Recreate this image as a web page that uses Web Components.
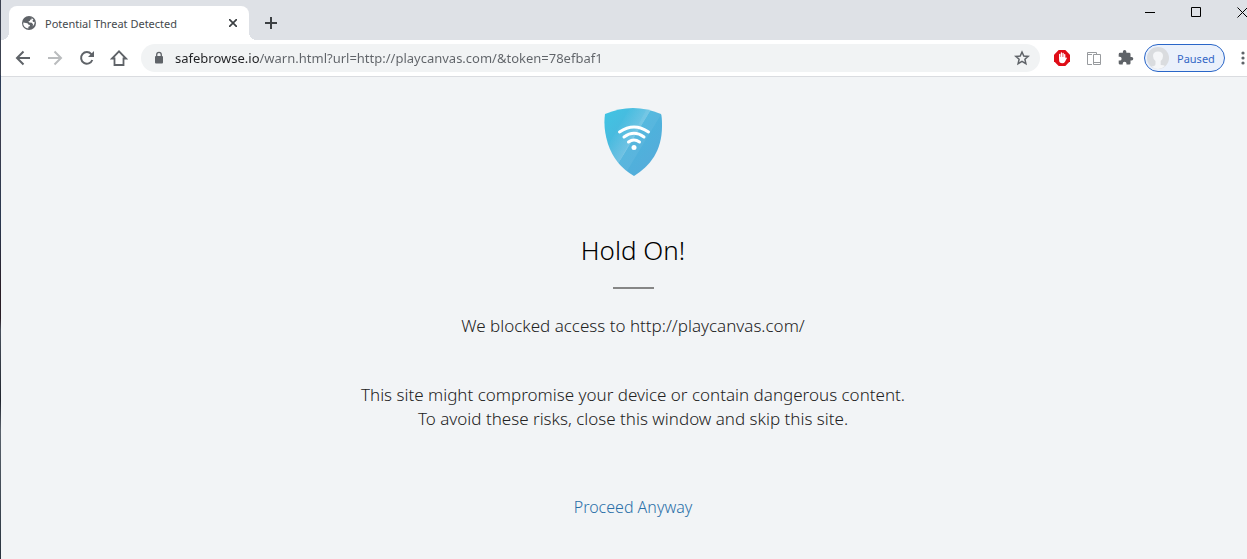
<!DOCTYPE html>
<html lang="en">
<head>
<meta charset="utf-8">
<title>Potential Threat Detected</title>
<style>
  html, body {
    height: 100%;
    margin: 0;
    overflow: hidden;
  }
  body {
    font-family: "Noto Sans", "Liberation Sans", sans-serif;
    background: #f2f4f6;
  }
</style>
</head>
<body>
<sb-window>
  <sb-tab-strip slot="tabs">
    <sb-tab>Potential Threat Detected</sb-tab>
  </sb-tab-strip>
  <sb-toolbar slot="toolbar" profile="Paused">
    <sb-address url="safebrowse.io/warn.html?url=http://playcanvas.com/&amp;token=78efbaf1"></sb-address>
  </sb-toolbar>
  <sb-warning>
    <span slot="title">Hold On!</span>
    <span slot="blocked">We blocked access to http://playcanvas.com/</span>
    <span slot="detail">This site might compromise your device or contain dangerous content.<br>To avoid these risks, close this window and skip this site.</span>
    <span slot="action">Proceed Anyway</span>
  </sb-warning>
</sb-window>

<script>
class SBWindow extends HTMLElement {
  constructor() {
    super();
    this.attachShadow({ mode: 'open' });
  }

  connectedCallback() {
    this.shadowRoot.innerHTML = `
      <style>
        /* the window runs a little past the right edge of the screen */
        :host {
          display: flex;
          flex-direction: column;
          box-sizing: border-box;
          min-height: 100%;
          margin-right: -18px;
          border-left: 1px solid;
          border-image: linear-gradient(#3c4250 0 76px, #2b3a55 76px, #33415a 110px, #3c3c4c 130px, #2a3850 220px, #291c25 290px, #291c25 318px, #48505c 330px, #20242e 400px, #5a626c 430px, #28323e 559px) 1;
        }
      </style>
      <slot name="tabs"></slot>
      <slot name="toolbar"></slot>
      <slot></slot>
    `;
  }
}

class SBTabStrip extends HTMLElement {
  constructor() {
    super();
    this.attachShadow({ mode: 'open' });
  }

  connectedCallback() {
    this.shadowRoot.innerHTML = `
      <style>
        :host {
          display: flex;
          align-items: flex-start;
          height: 40px;
          padding-left: 8px;
          background: #dee1e6;
        }
        button {
          display: flex;
          align-items: center;
          justify-content: center;
          padding: 0;
          border: 0;
          background: none;
        }
        .new-tab {
          width: 28px;
          height: 28px;
          margin: 9px 0 0 8px;
          color: #3c4043;
        }
        .controls {
          display: flex;
          margin-left: auto;
          color: #000;
        }
        .controls button {
          width: 46px;
          height: 24px;
        }
        svg {
          fill: none;
          stroke: currentColor;
        }
      </style>
      <slot></slot>
      <button class="new-tab" aria-label="New tab">
        <svg width="12" height="12" stroke-width="2"><path d="M6 0v12M0 6h12"/></svg>
      </button>
      <div class="controls">
        <button aria-label="Minimize"><svg width="11" height="11"><path d="M0 5.500h10"/></svg></button>
        <button aria-label="Maximize"><svg width="11" height="11"><path d="M.5 .5h9v9h-9z"/></svg></button>
        <button aria-label="Close"><svg width="11" height="11"><path d="M.5 .5l10 10M10.500 .5l-10 10"/></svg></button>
      </div>
    `;
  }
}

class SBTab extends HTMLElement {
  constructor() {
    super();
    this.attachShadow({ mode: 'open' });
  }

  connectedCallback() {
    this.shadowRoot.innerHTML = `
      <style>
        :host {
          position: relative;
          display: flex;
          align-items: center;
          box-sizing: border-box;
          width: 240px;
          height: 34px;
          margin-top: 6px;
          padding: 0 8px 0 12px;
          border-radius: 8px 8px 0 0;
          background: #fff;
          color: #45494d;
          font-size: 11px;
        }
        /* feet where the tab meets the toolbar */
        :host::before,
        :host::after {
          content: "";
          position: absolute;
          bottom: 0;
          width: 8px;
          height: 8px;
        }
        :host::before {
          left: -8px;
          background: radial-gradient(circle at 0 0, transparent 8px, #fff 8px);
        }
        :host::after {
          right: -8px;
          background: radial-gradient(circle at 100% 0, transparent 8px, #fff 8px);
        }
        .label {
          flex: 1;
          margin-left: 8px;
          white-space: nowrap;
        }
        button {
          display: flex;
          align-items: center;
          justify-content: center;
          width: 16px;
          height: 16px;
          padding: 0;
          border: 0;
          background: none;
        }
      </style>
      <svg width="16" height="16" viewBox="0 0 16 16">
        <circle cx="8" cy="8" r="7" fill="#5f6368"/>
        <path d="M2.300 7.600L6.300 8.300Q7.200 8.600 7.200 9.500L9 10L8.700 11.200L7.300 11.800L7.400 13.600Q3.200 13.200 2.300 9.600Z" fill="#fff"/>
        <path d="M8.200 2.400L10.600 2.800L10.800 4.200L9.200 4.800L8.800 6L7.300 6.600L8.300 7.500L10.800 7.700L12 9.200L11.700 11.500Q14 9.400 13.600 6.800L12.200 6.900L11.400 5.800L12.500 4.600Q10.800 2.300 8.200 2.400Z" fill="#fff"/>
      </svg>
      <span class="label"><slot></slot></span>
      <button aria-label="Close tab">
        <svg width="8" height="8" fill="none" stroke="#3c4043" stroke-width="1.700"><path d="M0 0l8 8M8 0L0 8"/></svg>
      </button>
    `;
  }
}

class SBToolbar extends HTMLElement {
  constructor() {
    super();
    this.attachShadow({ mode: 'open' });
  }

  connectedCallback() {
    const profile = this.getAttribute('profile');
    this.shadowRoot.innerHTML = `
      <style>
        :host {
          display: flex;
          align-items: center;
          height: 36px;
          padding: 0 8px;
          border-bottom: 1px solid #dadce0;
          background: #fff;
          color: #5f6368;
        }
        button {
          display: flex;
          align-items: center;
          justify-content: center;
          flex: none;
          padding: 0;
          border: 0;
          background: none;
          color: inherit;
          font: inherit;
        }
        .icon {
          width: 28px;
          height: 28px;
        }
        .nav,
        .extensions {
          display: flex;
          gap: 4px;
        }
        .nav {
          margin-right: 8px;
        }
        .extensions {
          margin: 0 4px 0 8px;
        }
        .disabled {
          color: #babcbe;
        }
        .profile {
          justify-content: flex-start;
          gap: 8px;
          box-sizing: border-box;
          width: 81px;
          height: 28px;
          margin-right: 4px;
          padding-left: 2px;
          border: 1px solid #2a66c8;
          border-radius: 14px;
          background: #ebf1fb;
          color: #3367c6;
          font-size: 11px;
        }
      </style>
      <div class="nav">
        <button class="icon" aria-label="Back">
          <svg width="16" height="16" fill="none" stroke="currentColor" stroke-width="2"><path d="M15 8H2M8.500 1.500L2 8l6.500 6.500"/></svg>
        </button>
        <button class="icon disabled" aria-label="Forward" disabled>
          <svg width="16" height="16" fill="none" stroke="currentColor" stroke-width="2"><path d="M1 8h13M7.500 1.500L14 8l-6.500 6.500"/></svg>
        </button>
        <button class="icon" aria-label="Reload">
          <svg width="16" height="16"><path d="M13.300 10A5.800 5.800 0 1 1 12.300 4.100L13.500 5.300" fill="none" stroke="currentColor" stroke-width="2"/><path d="M15 1v6H9z" fill="currentColor"/></svg>
        </button>
        <button class="icon" aria-label="Home">
          <svg width="18" height="18" fill="none" stroke="currentColor" stroke-width="1.800"><path d="M2 9.500H4.500V16H13.500V9.500H16L9 2.300z"/></svg>
        </button>
      </div>
      <slot></slot>
      <div class="extensions">
        <button class="icon" aria-label="Ad blocker">
          <svg width="16" height="16" viewBox="0 0 16 16">
            <path d="M4.700 0h6.600L16 4.700v6.600L11.300 16H4.700L0 11.300V4.700z" fill="#df0d17"/>
            <path d="M5.700 8V4.300M7.400 7.500V3M9.100 7.500V3.300M10.700 8V4.600" stroke="#fff" stroke-width="1.300" stroke-linecap="round"/>
            <path d="M5.100 7H11.300V8.300L12.300 7.500L13 8L11 11.700Q10.200 13.300 8.300 13.300Q5.100 13.300 5.100 10z" fill="#fff"/>
          </svg>
        </button>
        <button class="icon" aria-label="Device preview">
          <svg width="16" height="16" fill="none" stroke="#989b9e" stroke-width="1">
            <path d="M6 14.500H1.500V2.500H10.500V4.500M1.500 4.500H6M7.500 14.500V4.500H14.500V14.500zM7.500 12.500H14.500"/>
          </svg>
        </button>
        <button class="icon" aria-label="Extensions">
          <svg width="16" height="16" viewBox="1 1 23 23" fill="currentColor"><path d="M20.500 11H19V7a2 2 0 0 0-2-2h-4V3.500a2.500 2.500 0 0 0-5 0V5H4a2 2 0 0 0-2 2v3.800h1.500a2.700 2.700 0 0 1 0 5.400H2V20a2 2 0 0 0 2 2h3.800v-1.500a2.700 2.700 0 0 1 5.400 0V22H17a2 2 0 0 0 2-2v-4h1.500a2.500 2.500 0 0 0 0-5z"/></svg>
        </button>
      </div>
      <button class="profile">
        <svg width="22" height="22" viewBox="0 0 22 22">
          <circle cx="11" cy="11" r="11" fill="#dadcdf"/>
          <path d="M8.500 17V14Q6 12 6 9Q6 4.500 11 4.500Q16 4.500 16 9Q16 12 13.700 14V18Q17 18 18 19Q15 22 11 22Q7.500 22 4.500 19.500Q8.500 19 8.500 17Z" fill="#f5f6f8"/>
        </svg>
        ${profile}
      </button>
      <button class="icon" aria-label="Menu">
        <svg width="4" height="16" fill="currentColor"><circle cx="2" cy="3" r="1.600"/><circle cx="2" cy="8" r="1.600"/><circle cx="2" cy="13" r="1.600"/></svg>
      </button>
    `;
  }
}

class SBAddress extends HTMLElement {
  constructor() {
    super();
    this.attachShadow({ mode: 'open' });
  }

  connectedCallback() {
    this.shadowRoot.innerHTML = `
      <style>
        :host {
          display: flex;
          align-items: center;
          flex: 1;
          height: 28px;
          padding: 0 10px 0 12px;
          border-radius: 14px;
          background: #f1f3f4;
        }
        /* the host name is darker than the rest of the address */
        input {
          flex: 1;
          min-width: 0;
          height: 20px;
          margin: 0 12px 0 10px;
          padding: 0;
          border: 0;
          outline: 0;
          background: linear-gradient(90deg, #202124 85px, #5f6368 85px);
          background-clip: text;
          -webkit-background-clip: text;
          -webkit-text-fill-color: transparent;
          color: #5f6368;
          font-family: inherit;
          font-size: 13px;
        }
        button {
          display: flex;
          padding: 0;
          border: 0;
          background: none;
        }
      </style>
      <svg width="12" height="14" viewBox="0 0 12 14">
        <rect x="2" y="5" width="8" height="7.500" rx="1" fill="#5f6368"/>
        <path d="M3.700 5.500V3.700a2.300 2.300 0 0 1 4.600 0V5.500" fill="none" stroke="#5f6368" stroke-width="1.300"/>
      </svg>
      <input type="text" aria-label="Address" spellcheck="false">
      <button aria-label="Bookmark this page">
        <svg width="16" height="16" viewBox="0 0 16 16" fill="none" stroke="#5f6368" stroke-width="1.500"><path d="M8 2L9.800 6L14.200 6.400L10.900 9.300L11.900 13.600L8 11.300L4.100 13.600L5.100 9.300L1.800 6.400L6.200 6z"/></svg>
      </button>
    `;
    this.shadowRoot.querySelector('input').value = this.getAttribute('url');
  }
}

class SBShield extends HTMLElement {
  constructor() {
    super();
    this.attachShadow({ mode: 'open' });
  }

  connectedCallback() {
    this.shadowRoot.innerHTML = `
      <style>
        :host {
          display: block;
          width: 58px;
          height: 68px;
        }
        svg {
          display: block;
        }
      </style>
      <svg width="58" height="68" viewBox="0 0 58 68">
        <defs>
          <linearGradient id="body" x1="0" y1="0" x2="1" y2="1">
            <stop offset="0" stop-color="#40c5e3"/>
            <stop offset=".5" stop-color="#4db3dc"/>
            <stop offset="1" stop-color="#58a9da"/>
          </linearGradient>
          <linearGradient id="shine" gradientUnits="userSpaceOnUse" x1="12" y1="24" x2="40" y2="41">
            <stop offset="0" stop-color="#fff" stop-opacity=".02"/>
            <stop offset=".55" stop-color="#fff" stop-opacity=".2"/>
            <stop offset=".57" stop-color="#fff" stop-opacity="0"/>
          </linearGradient>
          <clipPath id="shape"><path d="M1 6Q15 0 29 0Q43 0 57 6Q58 8 58 18C58 43 46 58 30 68Q11 57 4 36Q-1 20 1 6Z"/></clipPath>
        </defs>
        <g clip-path="url(#shape)">
          <path d="M0 0h58v68H0z" fill="url(#body)"/>
          <path d="M26 0H52L15 62L0 44z" fill="url(#shine)"/>
          <path d="M43 0H58V5L20 68H8z" fill="#fff" opacity=".06"/>
        </g>
        <g fill="none" stroke="#fff" stroke-width="3" stroke-linecap="round">
          <path d="M15.500 24Q30 14 44.500 24"/>
          <path d="M20 29Q30 21.500 40 29"/>
          <path d="M24.500 34Q30 30 35.500 34"/>
        </g>
        <circle cx="30" cy="39.500" r="2.500" fill="#fff"/>
      </svg>
    `;
  }
}

class SBWarning extends HTMLElement {
  constructor() {
    super();
    this.attachShadow({ mode: 'open' });
  }

  connectedCallback() {
    this.shadowRoot.innerHTML = `
      <style>
        :host {
          display: flex;
          flex-direction: column;
          align-items: center;
          flex: 1;
          padding-top: 31px;
          background: #f2f4f6;
          color: #222;
          font-size: 17px;
          font-weight: 300;
          line-height: 24px;
          text-align: center;
        }
        h1 {
          margin: 56px 0 0;
          color: #000;
          font-size: 26px;
          font-weight: 300;
          line-height: 36px;
        }
        hr {
          width: 41px;
          height: 2px;
          margin: 19px 0 0;
          border: 0;
          background: #868686;
        }
        p {
          margin: 0;
        }
        .blocked {
          margin-top: 25px;
        }
        .detail {
          margin-top: 45px;
        }
        a {
          margin-top: 64px;
          color: #2a6fa8;
          font-size: 16px;
          text-decoration: none;
        }
      </style>
      <sb-shield></sb-shield>
      <h1><slot name="title"></slot></h1>
      <hr>
      <p class="blocked"><slot name="blocked"></slot></p>
      <p class="detail"><slot name="detail"></slot></p>
      <a href="#proceed"><slot name="action"></slot></a>
    `;
  }
}

customElements.define('sb-window', SBWindow);
customElements.define('sb-tab-strip', SBTabStrip);
customElements.define('sb-tab', SBTab);
customElements.define('sb-toolbar', SBToolbar);
customElements.define('sb-address', SBAddress);
customElements.define('sb-shield', SBShield);
customElements.define('sb-warning', SBWarning);
</script>
</body>
</html>
